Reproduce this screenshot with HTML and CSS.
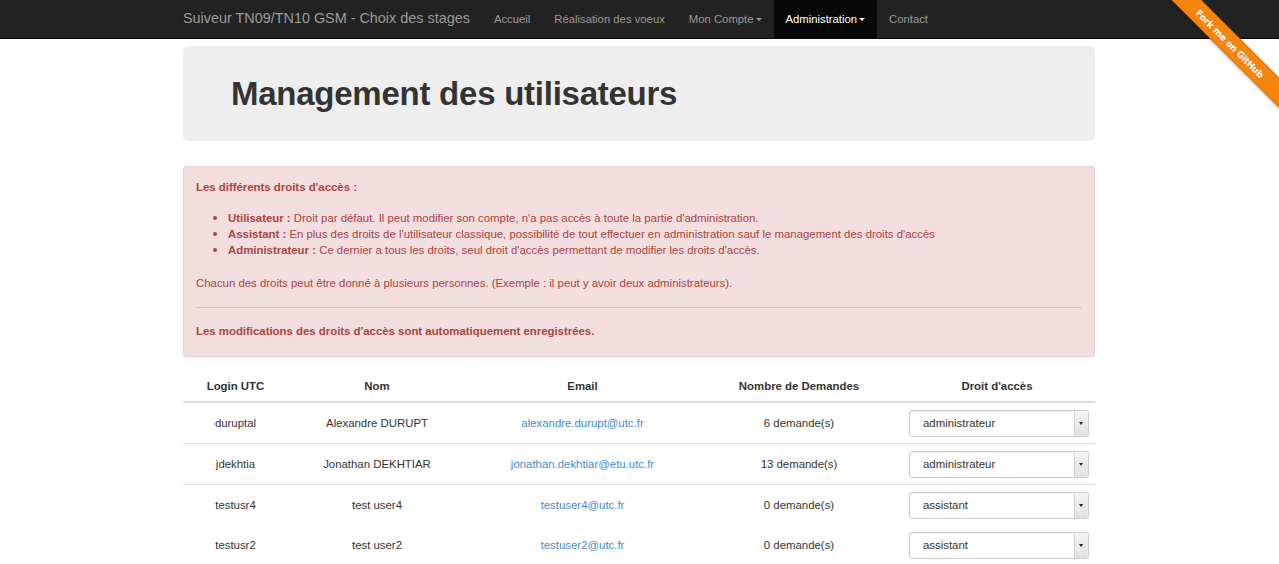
FILE: index.html
```html
<!DOCTYPE html>
<html lang="fr">
<head>
<meta charset="utf-8">
<title>Management des utilisateurs</title>
<link rel="stylesheet" href="styles.css">
</head>
<body>
<nav class="navbar">
  <div class="container nav-inner">
    <a class="brand" href="#">Suiveur TN09/TN10 GSM - Choix des stages</a>
    <ul class="nav">
      <li><a href="#">Accueil</a></li>
      <li><a href="#">Réalisation des voeux</a></li>
      <li><a href="#">Mon Compte<span class="caret"></span></a></li>
      <li class="active"><a href="#">Administration<span class="caret"></span></a></li>
      <li><a href="#">Contact</a></li>
    </ul>
  </div>
</nav>

<div class="ribbon-wrap"><a class="ribbon" href="#">Fork me on GitHub</a></div>

<main class="container">
  <div class="jumbotron">
    <h1>Management des utilisateurs</h1>
  </div>

  <div class="alert">
    <p class="alert-title"><strong>Les différents droits d'accès :</strong></p>
    <ul class="rights">
      <li><strong>Utilisateur :</strong> Droit par défaut. Il peut modifier son compte, n'a pas accès à toute la partie d'administration.</li>
      <li><strong>Assistant :</strong> En plus des droits de l'utilisateur classique, possibilité de tout effectuer en administration sauf le management des droits d'accès</li>
      <li><strong>Administrateur :</strong> Ce dernier a tous les droits, seul droit d'accès permettant de modifier les droits d'accès.</li>
    </ul>
    <p class="alert-note">Chacun des droits peut être donné à plusieurs personnes. (Exemple : il peut y avoir deux administrateurs).</p>
    <hr class="alert-hr">
    <p class="alert-foot"><strong>Les modifications des droits d'accès sont automatiquement enregistrées.</strong></p>
  </div>

  <table class="users">
    <colgroup>
      <col class="c1"><col class="c2"><col class="c3"><col class="c4"><col class="c5">
    </colgroup>
    <thead>
      <tr><th>Login UTC</th><th>Nom</th><th>Email</th><th>Nombre de Demandes</th><th>Droit d'accès</th></tr>
    </thead>
    <tbody>
      <tr>
        <td>duruptal</td><td>Alexandre DURUPT</td><td><a href="#">alexandre.durupt@utc.fr</a></td><td>6 demande(s)</td>
        <td><div class="select"><select><option>administrateur</option><option>assistant</option><option>utilisateur</option></select><span class="arrow"></span></div></td>
      </tr>
      <tr>
        <td>jdekhtia</td><td>Jonathan DEKHTIAR</td><td><a href="#">jonathan.dekhtiar@etu.utc.fr</a></td><td>13 demande(s)</td>
        <td><div class="select"><select><option>administrateur</option><option>assistant</option><option>utilisateur</option></select><span class="arrow"></span></div></td>
      </tr>
      <tr>
        <td>testusr4</td><td>test user4</td><td><a href="#">testuser4@utc.fr</a></td><td>0 demande(s)</td>
        <td><div class="select"><select><option>assistant</option><option>administrateur</option><option>utilisateur</option></select><span class="arrow"></span></div></td>
      </tr>
      <tr class="noline">
        <td>testusr2</td><td>test user2</td><td><a href="#">testuser2@utc.fr</a></td><td>0 demande(s)</td>
        <td><div class="select"><select><option>assistant</option><option>administrateur</option><option>utilisateur</option></select><span class="arrow"></span></div></td>
      </tr>
    </tbody>
  </table>
</main>
</body>
</html>
```

FILE: styles.css
```css
* { box-sizing: border-box; }

html, body {
  margin: 0;
  padding: 0;
}

body {
  font-family: "Liberation Sans", Arial, Helvetica, sans-serif;
  font-size: 11.4px;
  line-height: 16px;
  color: #333;
  background: #fff;
  overflow: hidden;
}

a { color: #428bca; text-decoration: none; }

.container {
  width: 912px;
  margin-left: calc(50% - 456.5px);
}

/* Navbar */
.navbar {
  background: #222;
  border-bottom: 1px solid #080808;
  height: 39px;
}

.nav-inner {
  display: flex;
  align-items: stretch;
  height: 38px;
}

.brand {
  color: #9d9d9d;
  font-size: 14.4px;
  line-height: 37px;
  padding-right: 12px;
  white-space: nowrap;
}

.nav {
  display: flex;
  list-style: none;
  margin: 0;
  padding: 0;
}

.nav li a {
  display: flex;
  align-items: center;
  height: 38px;
  padding: 0 12px 1px;
  color: #9d9d9d;
  font-size: 11.3px;
  white-space: nowrap;
}

.nav li.active a {
  background: #080808;
  color: #fff;
}

.caret {
  display: inline-block;
  width: 0;
  height: 0;
  margin-left: 2px;
  margin-top: 1px;
  border-top: 3px solid currentColor;
  border-left: 3px solid transparent;
  border-right: 3px solid transparent;
}

/* GitHub ribbon */
.ribbon-wrap {
  position: absolute;
  top: 0;
  right: 0;
  width: 130px;
  height: 130px;
  overflow: hidden;
  z-index: 10;
}

.ribbon {
  position: absolute;
  left: -19px;
  top: 33px;
  width: 200px;
  height: 21px;
  line-height: 20px;
  background: #f5850f;
  color: #fff;
  font-family: "DejaVu Sans", "Liberation Sans", sans-serif;
  font-weight: bold;
  font-size: 9px;
  letter-spacing: -0.2px;
  text-align: center;
  transform: rotate(45deg);
  box-shadow: 0 1px 3px rgba(0,0,0,0.35);
  border-top: 1px solid #e07400;
  border-bottom: 1px solid #e07400;
}

/* Jumbotron */
.jumbotron {
  margin-top: 7px;
  background: #eee;
  border-radius: 5px;
  height: 95px;
  padding: 0 48px;
  display: flex;
  align-items: center;
  margin-bottom: 25px;
}

.jumbotron h1 {
  margin: 0;
  font-size: 33px;
  font-weight: bold;
  letter-spacing: -0.25px;
  color: #333;
  line-height: 1;
}

/* Alert */
.alert {
  background: #f2dede;
  border: 1px solid #ebccd1;
  border-radius: 3px;
  color: #a94442;
  padding: 12px 12px 17px;
  margin-bottom: 15px;
}

.alert p { margin: 0; }

.rights {
  margin: 15px 0 0;
  padding-left: 32px;
}

.rights li::marker { font-size: 13px; }

.alert-note { margin-top: 17px !important; }

.alert-hr {
  border: 0;
  border-top: 1px solid #e4b9c0;
  margin: 16px 0 15px;
}

/* Table */
.users {
  width: 912px;
  border-collapse: collapse;
  table-layout: fixed;
}

.c1 { width: 105px; }
.c2 { width: 178px; }
.c3 { width: 233px; }
.c4 { width: 200px; }
.c5 { width: 196px; }

.users th {
  font-weight: bold;
  text-align: center;
  padding: 6px 6px 7px;
  border-bottom: 2px solid #ddd;
}

.users td {
  text-align: center;
  vertical-align: middle;
  padding: 6.5px 6px;
  border-top: 1px solid #ddd;
}

.users thead + tbody tr:first-child td { border-top: 0; }
.users tr.noline td { border-top: 0; }

.select {
  position: relative;
  width: 180px;
  height: 27px;
  margin: 0 0 0 auto;
}

.select select {
  appearance: none;
  -webkit-appearance: none;
  width: 100%;
  height: 27px;
  border: 1px solid #ccc;
  border-radius: 3px;
  background: #fff;
  padding: 0 20px 0 13px;
  font-family: "Liberation Sans", Arial, sans-serif;
  font-size: 11.4px;
  color: #333;
  box-shadow: inset 0 1px 1px rgba(0,0,0,0.075);
}

.arrow {
  position: absolute;
  top: 1px;
  right: 1px;
  bottom: 1px;
  width: 14px;
  background: linear-gradient(#f4f4f4, #e2e2e2);
  border-left: 1px solid #d0d0d0;
  border-radius: 0 2px 2px 0;
  pointer-events: none;
}

.arrow::after {
  content: "";
  position: absolute;
  left: 4px;
  top: 11px;
  border-top: 3px solid #222;
  border-left: 2.5px solid transparent;
  border-right: 2.5px solid transparent;
}
```
